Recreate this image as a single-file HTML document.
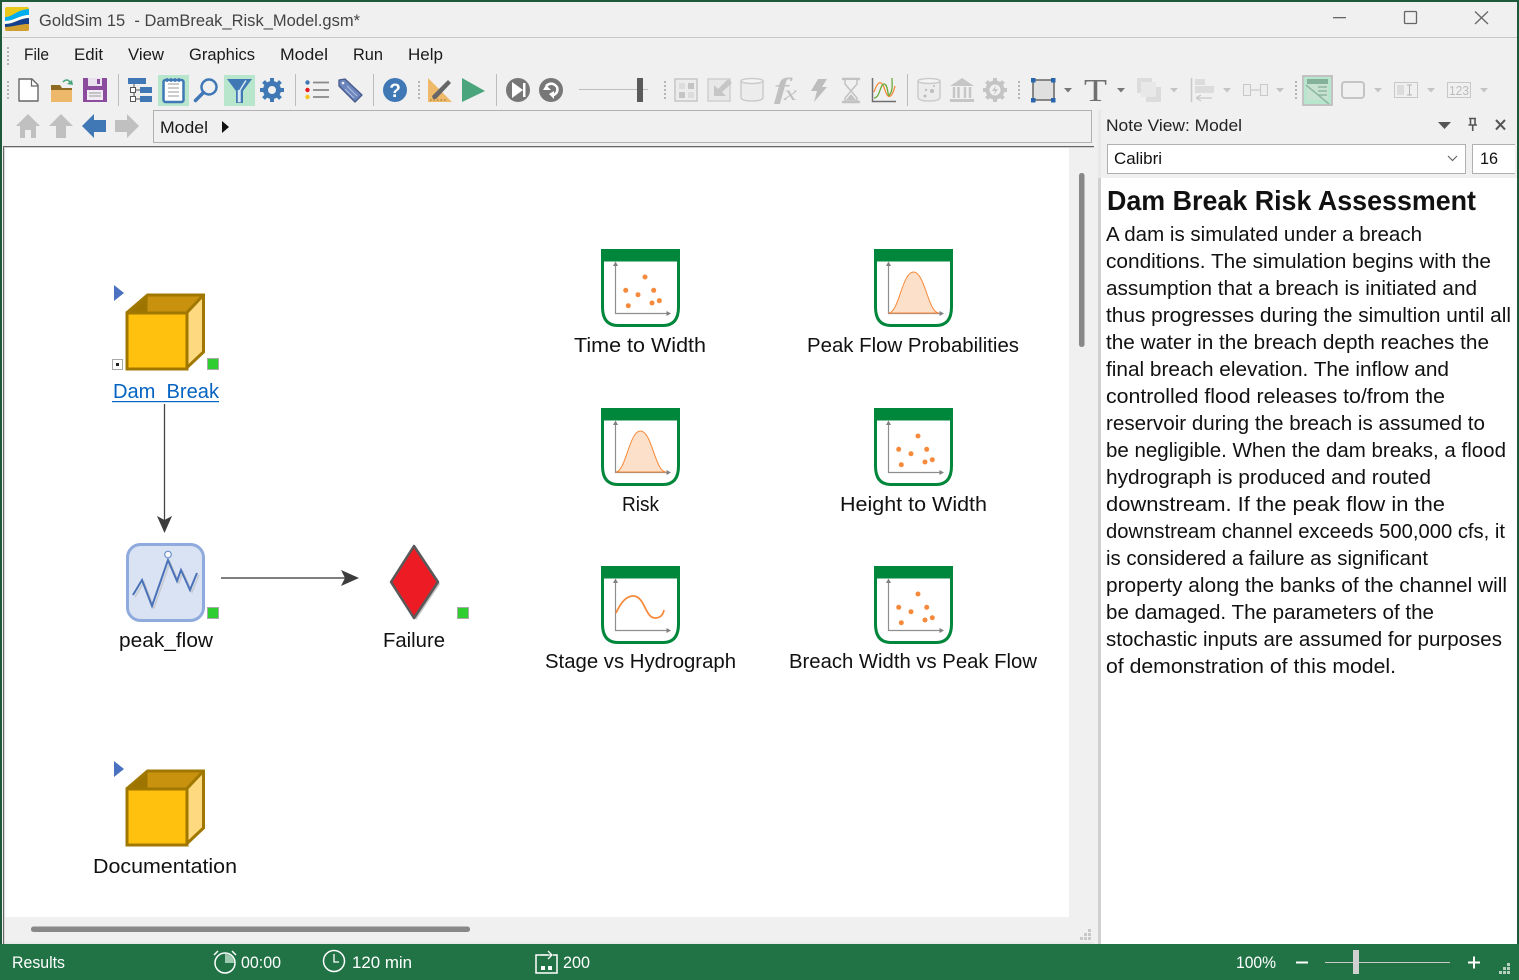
<!DOCTYPE html>
<html><head><meta charset="utf-8"><title>GoldSim</title>
<style>
html,body{margin:0;padding:0;width:1519px;height:980px;overflow:hidden;background:#f0f0f0}
svg{display:block;position:absolute;left:0;top:0}
text{font-family:"Liberation Sans",sans-serif;white-space:pre}
.m{font-size:17px;fill:#1a1a1a}
.l{font-size:20.5px;fill:#111}
.n{font-size:20.5px;fill:#111}
.s{font-size:17px;fill:#fff}
</style></head><body>
<svg width="1519" height="980" viewBox="0 0 1519 980" xmlns="http://www.w3.org/2000/svg">
<defs>
<g id="chart">
<path d="M1.5 1V58Q1.5 76.5 17 76.5H62Q77.5 76.5 77.5 58V1" fill="#fff" stroke="#00873c" stroke-width="3"/>
<rect x="0" y="0" width="79" height="12.5" fill="#00873c"/>
<path d="M14.5 16V64.5H66" fill="none" stroke="#8e8e8e" stroke-width="1.2"/>
<path d="M14.5 12.5l-2.500 4.500h5zM70 64.500l-4.500-2.500v5z" fill="#808080"/>
</g>
<g id="dots" fill="#f58a3c">
<circle cx="44" cy="28" r="2.500"/><circle cx="24.700" cy="41.300" r="2.500"/><circle cx="37" cy="45.700" r="2.500"/><circle cx="52.700" cy="41.300" r="2.500"/><circle cx="51" cy="54" r="2.500"/><circle cx="58.300" cy="51.700" r="2.500"/><circle cx="27.300" cy="56.700" r="2.500"/>
</g>
<path id="bell" d="M14.500 64C25 64 28 23 39.500 23C51 23 54 64 65 64Z" fill="#fde0c9" stroke="#f58a3c" stroke-width="1"/>
<g id="cube">
<path d="M127 314L148 296H204V353L187 369V314Z" fill="#ffd97f"/>
<path d="M127 314L148 296H204L187 314Z" fill="#c8920f"/>
<path d="M127 314L148 296V314Z" fill="#9d7400"/>
<rect x="127.500" y="314" width="60" height="56" fill="#ffc10e" stroke="#a07800" stroke-width="3"/>
<path d="M127 314L148 296H204V353L187 369M187 314L204 296" fill="none" stroke="#a07800" stroke-width="3"/>
</g>
<path id="tri" d="M114 285L124 293L114 301Z" fill="#4a72c0"/>
<g id="dd"><path d="M-4 -2H4L0 2.500Z" fill="#777"/></g>
<g id="ddl"><path d="M-4 -2H4L0 2.500Z" fill="#c4c4c4"/></g>
<g id="grip" fill="#b5b5b5"><rect x="0" y="0" width="2" height="2"/><rect x="0" y="4" width="2" height="2"/><rect x="0" y="8" width="2" height="2"/><rect x="0" y="12" width="2" height="2"/><rect x="0" y="16" width="2" height="2"/></g>
</defs>

<!-- window -->
<rect width="1519" height="980" fill="#f0f0f0"/>
<rect width="1519" height="2" fill="#1c5a3a"/>
<rect width="2" height="980" fill="#1c5a3a"/>
<rect x="1517" width="2" height="980" fill="#1c5a3a"/>
<rect x="3" y="37" width="1514" height="1" fill="#c8c8c8"/>

<!-- logo -->
<rect x="5" y="7" width="24" height="24" rx="2" fill="#e8c81a"/>
<path d="M5 17C13 17 16 10 29 9V15C20 15 14 21 5 21Z" fill="#00aeef"/>
<path d="M5 21C14 21 20 15 29 15V18C20 18 14 24 5 24Z" fill="#fff"/>
<path d="M5 24C14 24 20 18 29 18V24C20 24 14 27 5 27Z" fill="#143f8c"/>
<path d="M5 27C14 27 20 24 29 24V29Q29 31 27 31H7Q5 31 5 29Z" fill="#d19e30"/>

<text x="39" y="26" font-size="17" fill="#444" textLength="321" lengthAdjust="spacingAndGlyphs">GoldSim 15  - DamBreak_Risk_Model.gsm*</text>
<!-- window controls -->
<rect x="1333" y="17" width="13" height="1.300" fill="#666"/>
<rect x="1404.500" y="11.500" width="12" height="12" rx="1" fill="none" stroke="#666" stroke-width="1.300"/>
<path d="M1475 11.500L1488 24M1488 11.500L1475 24" stroke="#666" stroke-width="1.300"/>

<!-- menu -->
<use href="#grip" x="7" y="47"/>
<text class="m" x="24" y="60" textLength="25" lengthAdjust="spacingAndGlyphs">File</text>
<text class="m" x="74" y="60" textLength="29" lengthAdjust="spacingAndGlyphs">Edit</text>
<text class="m" x="128" y="60" textLength="36" lengthAdjust="spacingAndGlyphs">View</text>
<text class="m" x="189" y="60" textLength="66" lengthAdjust="spacingAndGlyphs">Graphics</text>
<text class="m" x="280" y="60" textLength="48" lengthAdjust="spacingAndGlyphs">Model</text>
<text class="m" x="353" y="60" textLength="30" lengthAdjust="spacingAndGlyphs">Run</text>
<text class="m" x="408" y="60" textLength="35" lengthAdjust="spacingAndGlyphs">Help</text>

<!-- toolbar -->
<use href="#grip" x="7" y="81"/>
<path d="M19 79H32L38 85V101H19Z" fill="#fff" stroke="#666" stroke-width="1.400" stroke-linejoin="round"/>
<path d="M31.500 79V86H38" fill="none" stroke="#666" stroke-width="1.200"/>
<path d="M51 85H60L62 88H72V102H51Z" fill="#edb869"/>
<path d="M51 85H60L62 88H72V90H51Z" fill="#8f6a22"/>
<path d="M63 82Q67 78 70 82" fill="none" stroke="#49a67c" stroke-width="1.500"/><path d="M73 85L67 84L72 80Z" fill="#49a67c"/>
<path d="M83 78H107V102H83Z" fill="#8b4c9e"/>
<rect x="88" y="78" width="14" height="8" fill="#e9e0ee"/><rect x="97" y="79" width="3" height="5" fill="#8b4c9e"/>
<rect x="87" y="90" width="16" height="10" fill="#f2edf5"/><path d="M89 93H101M89 96H101" stroke="#999"/>
<rect x="118" y="74" width="1" height="32" fill="#bdbdbd"/>
<!-- hierarchy -->
<rect x="128" y="78" width="18" height="6" fill="#3f78b5"/><rect x="140" y="87" width="12" height="6" fill="#3f78b5"/><rect x="140" y="96" width="12" height="6" fill="#3f78b5"/>
<path d="M134 84V99M134 90H140M134 99H140" stroke="#555" fill="none"/>
<rect x="130.500" y="87.500" width="5" height="5" fill="#fff" stroke="#555"/><rect x="130.500" y="96.500" width="5" height="5" fill="#fff" stroke="#555"/>
<!-- notes -->
<rect x="158" y="75" width="31" height="31" fill="#b8e6cc"/>
<rect x="163.500" y="80" width="20" height="22" rx="2" fill="#fff" stroke="#3f78b5" stroke-width="2.500"/>
<path d="M168 84H179M168 88H179M168 92H179M168 96H179" stroke="#999" stroke-width="1.100"/>
<path d="M167 78V82M171 78V82M175 78V82M179 78V82" stroke="#3f78b5" stroke-width="1.500"/>
<!-- magnify -->
<circle cx="209" cy="87" r="7.500" fill="none" stroke="#3f78b5" stroke-width="2.500"/>
<path d="M203.500 92.500L195.500 100.500" stroke="#3f78b5" stroke-width="3.500" stroke-linecap="round"/>
<!-- filter -->
<rect x="224" y="75" width="31" height="31" fill="#b8e6cc"/>
<path d="M227 79H252L243 91V103H236V91Z" fill="#3f78b5"/>
<path d="M246 80.500L240 90V101.500H238.500V90" fill="none" stroke="#d6e8f2" stroke-width="1.500"/>
<!-- gear -->
<g transform="translate(272,90)"><circle r="6.500" fill="none" stroke="#3f78b5" stroke-width="5"/><path d="M-2 -12H2V-6H-2ZM-2 6H2V12H-2ZM-12 -2H-6V2H-12ZM6 -2H12V2H6Z" fill="#3f78b5"/><path d="M-2 -12H2V-6H-2ZM-2 6H2V12H-2ZM-12 -2H-6V2H-12ZM6 -2H12V2H6Z" fill="#3f78b5" transform="rotate(45)"/></g>
<rect x="295" y="74" width="1" height="32" fill="#bdbdbd"/>
<!-- list -->
<circle cx="307.500" cy="82.500" r="2.200" fill="#3f78b5"/><circle cx="307.500" cy="90" r="2.200" fill="#e81c1c"/><circle cx="307.500" cy="97" r="2.200" fill="#f6c21a"/>
<path d="M313 82.500H329M313 90H329M313 97H329" stroke="#888" stroke-width="1.800"/>
<!-- tag -->
<path d="M339 80L345 79L362 95L355 102L339 86Z" fill="#6c86bd" stroke="#46598c" stroke-width="1.300" stroke-linejoin="round"/>
<path d="M347 86L357 96M345 89L354 98" stroke="#a9bbdd" stroke-width="1.200"/>
<circle cx="343" cy="83" r="1.300" fill="#f0f0f0"/>
<rect x="373" y="74" width="1" height="32" fill="#bdbdbd"/>
<!-- help -->
<circle cx="395" cy="90" r="12" fill="#3f78b5"/>
<text x="395" y="97" text-anchor="middle" font-size="19" font-weight="bold" fill="#fff">?</text>
<use href="#grip" x="418" y="81"/>
<!-- ruler/pencil -->
<path d="M428 78L452 102H428Z" fill="#efb96a"/>
<path d="M432 96L433 99H436L451 83L448 80Z" fill="#666"/>
<path d="M430 100H446" stroke="#8a6a30" stroke-dasharray="1.500 2"/>
<!-- play -->
<path d="M462 78L485 91L462 102Z" fill="#4ba57c"/>
<rect x="496" y="74" width="1" height="32" fill="#bdbdbd"/>
<circle cx="518" cy="90" r="12" fill="#777"/>
<path d="M512 82L523 90L512 98Z" fill="#fff"/><rect x="523" y="83" width="2.500" height="14" fill="#fff"/>
<circle cx="551" cy="90" r="12" fill="#777"/>
<path d="M546 86Q552 81 557 87Q559 93 552 96" fill="none" stroke="#fff" stroke-width="2.500"/>
<path d="M543 90H551L546 85Z" fill="#fff"/><path d="M549 94L554 99V91Z" fill="#fff"/>
<rect x="579" y="89" width="69" height="1" fill="#bdbdbd"/>
<rect x="637" y="78" width="6" height="24" fill="#5a5a5a"/>
<use href="#grip" x="664" y="81"/>
<!-- disabled group -->
<rect x="675" y="79" width="22" height="22" fill="#ececec" stroke="#c6c6c6" stroke-width="1.500"/>
<rect x="679" y="83" width="6" height="6" fill="#dcdcdc"/><rect x="688" y="83" width="6" height="6" fill="#c4c4c4"/><rect x="679" y="92" width="6" height="6" fill="#c4c4c4"/><rect x="688" y="92" width="6" height="6" fill="#dcdcdc"/>
<rect x="708" y="79" width="22" height="22" fill="#e8e8e8" stroke="#cfcfcf" stroke-width="1.500"/>
<path d="M728 79L732 83L722 92L726 96H714V85L718 89Z" fill="#c6c6c6"/>
<path d="M741 81V97Q741 101 752 101Q763 101 763 97V81" fill="#ececec" stroke="#cbcbcb" stroke-width="1.500"/><ellipse cx="752" cy="81" rx="11" ry="2.500" fill="#f4f4f4" stroke="#cbcbcb" stroke-width="1.500"/>
<text x="774" y="98" font-style="italic" font-size="28" fill="#c0c0c0" font-weight="bold" style="font-family:'Liberation Serif',serif" textLength="15" lengthAdjust="spacingAndGlyphs">f</text><text x="784" y="100" font-size="20" font-style="italic" fill="#c0c0c0" style="font-family:'Liberation Serif',serif" textLength="13" lengthAdjust="spacingAndGlyphs">x</text>
<path d="M818 79H827L822 87H827L814 102L817 91H811Z" fill="#bdbdbd"/>
<path d="M843 79H859M843 102H859" stroke="#c2c2c2" stroke-width="2.500" stroke-linecap="round"/><path d="M845 80V84L851 91L845 98V101H857V98L851 91L857 84V80" fill="#f0f0f0" stroke="#c2c2c2" stroke-width="1.500"/><path d="M846 100L851 94L856 100Z" fill="#c2c2c2"/>
<!-- chart icon -->
<path d="M872.500 78V101.500H896" fill="none" stroke="#6e6e6e" stroke-width="1.500"/>
<path d="M874 92C878 80 882 80 885 90C888 100 892 98 895 86" fill="none" stroke="#f58a3c" stroke-width="1.300"/>
<path d="M874 98C880 98 880 84 884 84C889 84 887 100 890 94C893 90 892 84 892 78" fill="none" stroke="#6aab3a" stroke-width="1.300"/>
<rect x="907" y="74" width="1" height="32" fill="#bdbdbd"/>
<path d="M918 81V97Q918 101 929 101Q940 101 940 97V81" fill="#ececec" stroke="#cbcbcb" stroke-width="1.500"/><ellipse cx="929" cy="81" rx="11" ry="2.500" fill="#f4f4f4" stroke="#cbcbcb" stroke-width="1.500"/>
<circle cx="932" cy="91" r="2" fill="#bdbdbd"/><circle cx="925" cy="96" r="1.500" fill="#bdbdbd"/><circle cx="926" cy="90" r="1.200" fill="#bdbdbd"/><circle cx="934" cy="86" r="1" fill="#bdbdbd"/>
<path d="M950 86L962 78L974 86ZM950 99H974V102H950Z" fill="#c6c6c6"/><path d="M954 87V98M958.500 87V98M965 87V98M970 87V98" stroke="#c6c6c6" stroke-width="2.500"/>
<g transform="translate(995,90)"><circle r="7.500" fill="none" stroke="#c4c4c4" stroke-width="4"/><path d="M-2 -12H2V-8H-2ZM-2 8H2V12H-2ZM-12 -2H-8V2H-12ZM8 -2H12V2H8Z" fill="#c4c4c4"/><path d="M-2 -12H2V-8H-2ZM-2 8H2V12H-2ZM-12 -2H-8V2H-12ZM8 -2H12V2H8Z" fill="#c4c4c4" transform="rotate(45)"/><path d="M1 -5L-3 1H0L-1 5L3 -1H0Z" fill="#c4c4c4"/></g>
<use href="#grip" x="1018" y="81"/>
<!-- shape -->
<rect x="1033" y="80" width="21" height="20" fill="#dfdfdf" stroke="#666" stroke-width="1.500"/>
<g fill="#2a66ad"><rect x="1031" y="78" width="4.500" height="4.500"/><rect x="1051" y="78" width="4.500" height="4.500"/><rect x="1031" y="98" width="4.500" height="4.500"/><rect x="1051" y="98" width="4.500" height="4.500"/></g>
<use href="#dd" x="1068" y="90"/>
<text x="1084" y="101" font-size="32" fill="#707070" style="font-family:'Liberation Serif',serif" textLength="23" lengthAdjust="spacingAndGlyphs">T</text>
<use href="#dd" x="1121" y="90"/>
<rect x="1137" y="78" width="15" height="15" fill="#dcdcdc"/><rect x="1146" y="87" width="15" height="15" fill="#dcdcdc"/><rect x="1141" y="82" width="15" height="15" fill="#e8e8e8"/>
<use href="#ddl" x="1174" y="90"/>
<path d="M1191.500 78V102" stroke="#c8c8c8" stroke-width="1.500"/><rect x="1195" y="79" width="10" height="6" fill="#dcdcdc"/><rect x="1195" y="86" width="19" height="7" fill="#dcdcdc"/><path d="M1196 98H1212M1196 98L1201 95M1196 98L1201 101" stroke="#c8c8c8" fill="none" stroke-width="1.300"/>
<use href="#ddl" x="1227" y="90"/>
<rect x="1243.500" y="84.500" width="7" height="11" fill="#eee" stroke="#c8c8c8"/><rect x="1260.500" y="84.500" width="7" height="11" fill="#eee" stroke="#c8c8c8"/><path d="M1251 90H1260" stroke="#c0c0c0"/>
<use href="#ddl" x="1280" y="90"/>
<use href="#grip" x="1295" y="81"/>
<rect x="1302" y="75" width="31" height="31" fill="#c2c2c2"/><rect x="1304" y="77" width="27" height="27" fill="#b8e6cc"/>
<rect x="1307" y="79" width="21" height="21" fill="#c7e2d1"/><rect x="1307" y="79" width="21" height="5" fill="#85b198"/>
<path d="M1318 87H1327M1318 91H1327M1318 95H1327" stroke="#8fb8a0" stroke-width="1.400"/><path d="M1306 85L1329 104" stroke="#8fb8a0" stroke-width="1.500"/>
<rect x="1342" y="82" width="22" height="16" rx="3" fill="none" stroke="#c4c4c4" stroke-width="2"/>
<use href="#ddl" x="1378" y="90"/>
<rect x="1394.500" y="82.500" width="23" height="15" fill="none" stroke="#c8c8c8"/><rect x="1397" y="85" width="7" height="10" fill="#dcdcdc"/><path d="M1407 85H1412M1409.500 85V95M1407 95H1412" stroke="#b5b5b5" fill="none"/>
<use href="#ddl" x="1431" y="90"/>
<rect x="1447.500" y="82.500" width="23" height="15" fill="none" stroke="#c8c8c8"/>
<text x="1449" y="95" font-size="12.500" fill="#bcbcbc" textLength="20" lengthAdjust="spacingAndGlyphs">123</text>
<use href="#ddl" x="1484" y="90"/>

<!-- nav row -->
<path d="M16 126L28 114L40 126H36V138H31V130H25V138H20V126Z" fill="#c0c0c0"/>
<path d="M49 126L61 114L73 126H66V138H56V126Z" fill="#c0c0c0"/>
<path d="M82 126L94 114V120H106V132H94V138Z" fill="#3f78b5"/>
<path d="M139 126L127 114V120H115V132H127V138Z" fill="#c0c0c0"/>
<rect x="153.500" y="110.500" width="938" height="32" fill="#f0f0f0" stroke="#b0b0b0"/>
<text class="m" x="160" y="133" textLength="48" lengthAdjust="spacingAndGlyphs">Model</text>
<path d="M222 121L229 127L222 133Z" fill="#111"/>

<!-- canvas -->
<rect x="3" y="146" width="1091" height="798" fill="#e8e8e8"/>
<rect x="3" y="146" width="1" height="798" fill="#666"/>
<rect x="4" y="146" width="1" height="798" fill="#d8d8d8"/>
<rect x="3" y="146" width="1091" height="1" fill="#666"/>
<rect x="4" y="147" width="1090" height="1" fill="#d0d0d0"/>
<rect x="5" y="148" width="1064" height="769" fill="#fff"/>
<rect x="1069" y="148" width="25" height="794" fill="#f0f0f0"/>
<rect x="5" y="917" width="1089" height="25" fill="#f0f0f0"/>
<rect x="1079" y="173" width="5.500" height="174" rx="2.500" fill="#888"/>
<rect x="31" y="926.500" width="439" height="5.500" rx="2.500" fill="#888"/>
<g fill="#c8c8c8"><rect x="1088" y="929" width="3" height="3"/><rect x="1084" y="933" width="3" height="3"/><rect x="1088" y="933" width="3" height="3"/><rect x="1080" y="937" width="3" height="3"/><rect x="1084" y="937" width="3" height="3"/><rect x="1088" y="937" width="3" height="3"/></g>
<rect x="1098" y="110" width="3" height="68" fill="#e8e8e8"/>
<rect x="1098" y="178" width="3" height="766" fill="#d0d0d0"/>

<!-- note panel -->
<text x="1106" y="131" font-size="17" fill="#222" textLength="136" lengthAdjust="spacingAndGlyphs">Note View: Model</text>
<path d="M1438 122H1451L1444.500 129Z" fill="#555"/>
<path d="M1469 118.500H1476M1470.500 118.500V125M1475 118.500V125M1468.500 125H1477M1472.700 125V131" fill="none" stroke="#555" stroke-width="1.600"/>
<path d="M1496 120L1505 129.500M1505 120L1496 129.500" stroke="#555" stroke-width="2"/>
<rect x="1107.500" y="144.500" width="358" height="29" fill="#fff" stroke="#b0b0b0"/>
<text x="1114" y="164" font-size="17" fill="#111" textLength="48" lengthAdjust="spacingAndGlyphs">Calibri</text>
<path d="M1448 156L1452.500 160.500L1457 156" fill="none" stroke="#666" stroke-width="1.200"/>
<rect x="1472" y="144" width="43" height="30" fill="#fff"/>
<path d="M1515 144.500H1472.500V173.500H1515" fill="none" stroke="#b0b0b0"/>
<text x="1480" y="164" font-size="17" fill="#111" textLength="18" lengthAdjust="spacingAndGlyphs">16</text>
<rect x="1101" y="178" width="416" height="766" fill="#fff"/>

<text x="1107" y="210" font-size="28" font-weight="bold" fill="#111" textLength="369" lengthAdjust="spacingAndGlyphs">Dam Break Risk Assessment</text>
<text class="n" x="1106" y="241" textLength="316" lengthAdjust="spacingAndGlyphs">A dam is simulated under a breach</text>
<text class="n" x="1106" y="268" textLength="385" lengthAdjust="spacingAndGlyphs">conditions. The simulation begins with the</text>
<text class="n" x="1106" y="295" textLength="371" lengthAdjust="spacingAndGlyphs">assumption that a breach is initiated and</text>
<text class="n" x="1106" y="322" textLength="405" lengthAdjust="spacingAndGlyphs">thus progresses during the simultion until all</text>
<text class="n" x="1106" y="349" textLength="383" lengthAdjust="spacingAndGlyphs">the water in the breach depth reaches the</text>
<text class="n" x="1106" y="376" textLength="343" lengthAdjust="spacingAndGlyphs">final breach elevation. The inflow and</text>
<text class="n" x="1106" y="403" textLength="339" lengthAdjust="spacingAndGlyphs">controlled flood releases to/from the</text>
<text class="n" x="1106" y="430" textLength="379" lengthAdjust="spacingAndGlyphs">reservoir during the breach is assumed to</text>
<text class="n" x="1106" y="457" textLength="400" lengthAdjust="spacingAndGlyphs">be negligible. When the dam breaks, a flood</text>
<text class="n" x="1106" y="484" textLength="325" lengthAdjust="spacingAndGlyphs">hydrograph is produced and routed</text>
<text class="n" x="1106" y="511" textLength="339" lengthAdjust="spacingAndGlyphs">downstream. If the peak flow in the</text>
<text class="n" x="1106" y="538" textLength="399" lengthAdjust="spacingAndGlyphs">downstream channel exceeds 500,000 cfs, it</text>
<text class="n" x="1106" y="565" textLength="322" lengthAdjust="spacingAndGlyphs">is considered a failure as significant</text>
<text class="n" x="1106" y="592" textLength="401" lengthAdjust="spacingAndGlyphs">property along the banks of the channel will</text>
<text class="n" x="1106" y="619" textLength="328" lengthAdjust="spacingAndGlyphs">be damaged. The parameters of the</text>
<text class="n" x="1106" y="646" textLength="396" lengthAdjust="spacingAndGlyphs">stochastic inputs are assumed for purposes</text>
<text class="n" x="1106" y="673" textLength="290" lengthAdjust="spacingAndGlyphs">of demonstration of this model.</text>

<!-- model elements -->
<use href="#tri"/>
<use href="#cube" x="-0.500" y="-1"/>
<rect x="112.500" y="359.500" width="10" height="10" fill="#fff" stroke="#aaa"/><rect x="116" y="363" width="3" height="3" fill="#222"/>
<rect x="207.500" y="358.500" width="11" height="11" fill="#2fce30" stroke="#aaa"/>
<text x="113" y="398" font-size="20.500" fill="#0563c1" textLength="106" lengthAdjust="spacingAndGlyphs">Dam  Break</text>
<rect x="112" y="401" width="107" height="1.200" fill="#0563c1"/>
<path d="M164.500 404V520" stroke="#444" stroke-width="1.300"/>
<path d="M157 516L164.500 520L172 516L164.500 533Z" fill="#3c3c3c"/>

<rect x="127.500" y="544.500" width="76" height="76" rx="13" fill="#dae3f3" stroke="#8faadc" stroke-width="3"/>
<polyline points="135,597 144,582 154,608 170,562 179,583 183,572 192,592 199,575" fill="none" stroke="#c6c9d0" stroke-width="1.500"/>
<polyline points="133,595 142,580 152,606 168,560 177,581 181,570 190,590 197,573" fill="none" stroke="#4a72b8" stroke-width="2"/>
<circle cx="168" cy="554.500" r="3.300" fill="#fff" stroke="#6f8fc9" stroke-width="1.200"/>
<rect x="207.500" y="607.500" width="11" height="11" fill="#2fce30" stroke="#aaa"/>
<text class="l" x="119" y="647" textLength="94" lengthAdjust="spacingAndGlyphs">peak_flow</text>

<path d="M221 578H345" stroke="#555" stroke-width="1.500"/>
<path d="M341 570L359 578L341 586L345 578Z" fill="#3c3c3c"/>

<path d="M416 547L440 584L416 620L393 584Z" fill="#c4c4c4"/>
<path d="M414 546L438 582L414 618L391 582Z" fill="#ed1c24" stroke="#595959" stroke-width="2.500" stroke-linejoin="round"/>
<rect x="457.500" y="607.500" width="11" height="11" fill="#2fce30" stroke="#aaa"/>
<text class="l" x="383" y="647" textLength="62" lengthAdjust="spacingAndGlyphs">Failure</text>

<use href="#tri" y="476"/>
<use href="#cube" x="-0.500" y="475"/>
<text class="l" x="93" y="873" textLength="144" lengthAdjust="spacingAndGlyphs">Documentation</text>

<!-- charts -->
<g transform="translate(601,249)"><use href="#chart"/><use href="#dots"/></g>
<text class="l" x="574" y="352" textLength="132" lengthAdjust="spacingAndGlyphs">Time to Width</text>
<g transform="translate(874,249)"><use href="#chart"/><use href="#bell"/></g>
<text class="l" x="807" y="352" textLength="212" lengthAdjust="spacingAndGlyphs">Peak Flow Probabilities</text>
<g transform="translate(601,408)"><use href="#chart"/><use href="#bell"/></g>
<text class="l" x="622" y="511" textLength="37" lengthAdjust="spacingAndGlyphs">Risk</text>
<g transform="translate(874,408)"><use href="#chart"/><use href="#dots"/></g>
<text class="l" x="840" y="511" textLength="147" lengthAdjust="spacingAndGlyphs">Height to Width</text>
<g transform="translate(601,566)"><use href="#chart"/><path d="M15 47C20 36 26 30 32 30C44 30 44 52 54 52C59 52 62 49 63 44" fill="none" stroke="#f58a3c" stroke-width="1.800"/></g>
<text class="l" x="545" y="668" textLength="191" lengthAdjust="spacingAndGlyphs">Stage vs Hydrograph</text>
<g transform="translate(874,566)"><use href="#chart"/><use href="#dots"/></g>
<text class="l" x="789" y="668" textLength="248" lengthAdjust="spacingAndGlyphs">Breach Width vs Peak Flow</text>

<!-- status bar -->
<rect x="0" y="944" width="1519" height="36" fill="#217346"/>
<text class="s" x="12" y="968" textLength="53" lengthAdjust="spacingAndGlyphs">Results</text>
<circle cx="225" cy="963" r="10" fill="none" stroke="#fff" stroke-width="1.500"/>
<path d="M225 954A9 9 0 0 1 234 963H225Z" fill="#9ecab2"/>
<path d="M214 955L218 951M236 955L232 951" stroke="#fff" stroke-width="1.500"/>
<text class="s" x="241" y="968" textLength="40" lengthAdjust="spacingAndGlyphs">00:00</text>
<circle cx="334" cy="961" r="10.500" fill="none" stroke="#fff" stroke-width="1.500"/>
<path d="M334 954V962H339" fill="none" stroke="#fff" stroke-width="1.300"/>
<text class="s" x="352" y="968" textLength="60" lengthAdjust="spacingAndGlyphs">120 min</text>
<path d="M548 955H536V973H557V955H553" fill="none" stroke="#fff" stroke-width="1.500"/>
<path d="M541 955H552M548 951L552 955L548 959" fill="none" stroke="#fff" stroke-width="1.300"/>
<rect x="541" y="966" width="4" height="4" fill="#fff"/><rect x="548" y="966" width="4" height="4" fill="#fff"/>
<text class="s" x="563" y="968" textLength="27" lengthAdjust="spacingAndGlyphs">200</text>
<text class="s" x="1236" y="968" textLength="40" lengthAdjust="spacingAndGlyphs">100%</text>
<rect x="1296" y="961.500" width="12" height="2" fill="#fff"/>
<rect x="1325" y="962" width="125" height="1" fill="#c8c8c8"/>
<rect x="1353" y="950" width="6" height="24" fill="#d0d0d0"/>
<path d="M1468 962.500H1480M1474 956.500V968.500" stroke="#fff" stroke-width="2"/>
<g fill="#b8cfc2"><rect x="1507" y="963" width="3" height="3"/><rect x="1503" y="967" width="3" height="3"/><rect x="1507" y="967" width="3" height="3"/><rect x="1499" y="971" width="3" height="3"/><rect x="1503" y="971" width="3" height="3"/><rect x="1507" y="971" width="3" height="3"/></g>
</svg>
</body></html>
